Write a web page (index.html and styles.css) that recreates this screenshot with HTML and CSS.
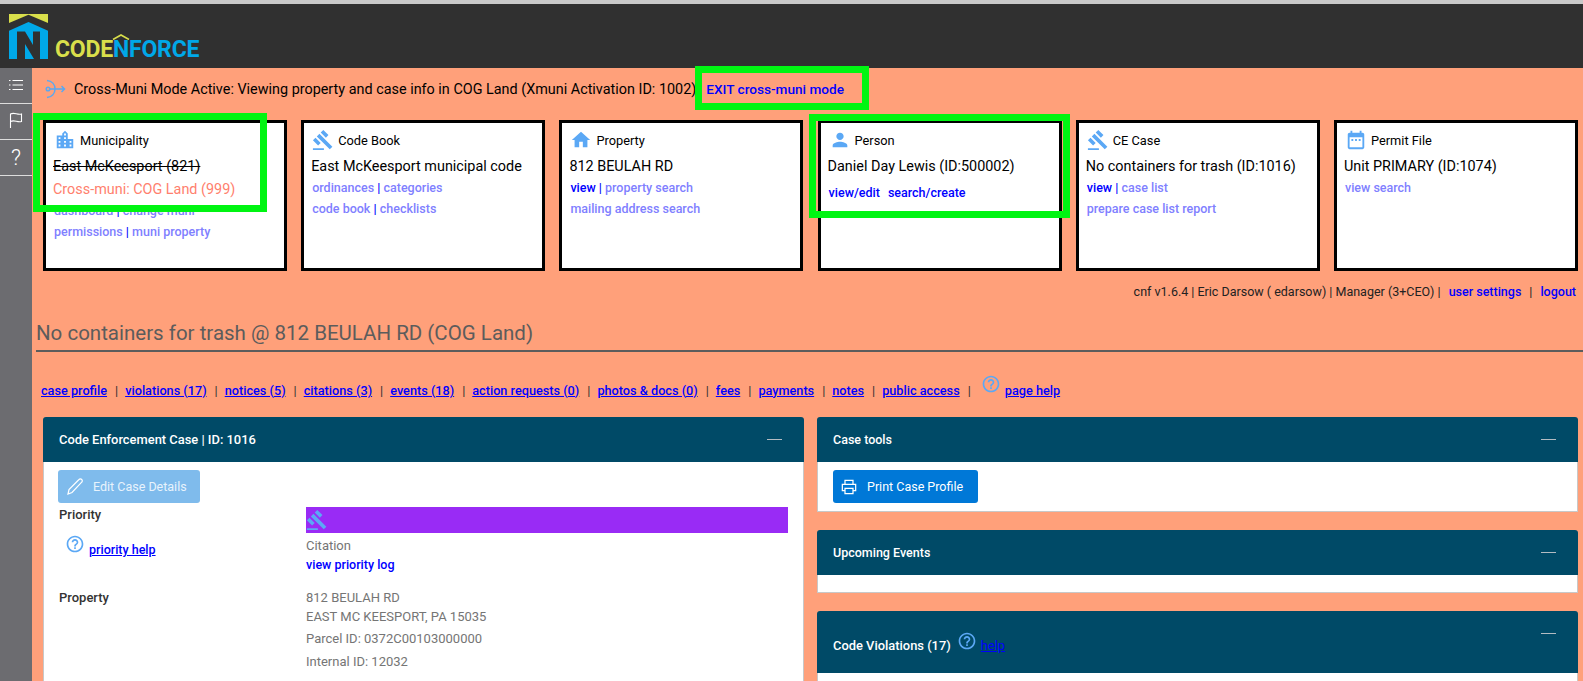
FILE: index.html
```html
<!DOCTYPE html>
<html>
<head>
    <title>CodeNForce</title>
    <meta name="viewport" content="width=device-width, initial-scale=1.0">
    <link rel="stylesheet" href="styles.css">
</head>
<body>
    <svg class="sprites" width="0" height="0">
        <symbol id="i-city" viewBox="0 0 24 24"><path d="M15 11V5l-3-3-3 3v2H3v14h18V11h-6zm-8 8H5v-2h2v2zm0-4H5v-2h2v2zm0-4H5V9h2v2zm6 8h-2v-2h2v2zm0-4h-2v-2h2v2zm0-4h-2V9h2v2zm0-4h-2V5h2v2zm6 12h-2v-2h2v2zm0-4h-2v-2h2v2z"/></symbol>
        <symbol id="i-gavel" viewBox="0 0 24 24"><path d="M1 21h12v2H1zM5.245 8.07l2.83-2.827 14.14 14.142-2.828 2.828zM12.317 1l5.657 5.656-2.83 2.83-5.654-5.66zM3.825 9.485l5.657 5.657-2.828 2.828-5.657-5.657z"/></symbol>
        <symbol id="i-home" viewBox="0 0 24 24"><path d="M10 20v-6h4v6h5v-8h3L12 3 2 12h3v8z"/></symbol>
        <symbol id="i-person" viewBox="0 0 24 24"><path d="M12 12c2.21 0 4-1.79 4-4s-1.79-4-4-4-4 1.79-4 4 1.79 4 4 4zm0 2c-2.67 0-8 1.34-8 4v2h16v-2c0-2.66-5.33-4-8-4z"/></symbol>
        <symbol id="i-cal" viewBox="0 0 24 24"><path d="M9 11H7v2h2v-2zm4 0h-2v2h2v-2zm4 0h-2v2h2v-2zm2-7h-1V2h-2v2H8V2H6v2H5c-1.11 0-1.99.9-1.99 2L3 20c0 1.1.89 2 2 2h14c1.1 0 2-.9 2-2V6c0-1.1-.9-2-2-2zm0 16H5V9h14v11z"/></symbol>
        <symbol id="i-help" viewBox="0 0 24 24"><path d="M11 18h2v-2h-2v2zm1-16C6.48 2 2 6.48 2 12s4.48 10 10 10 10-4.48 10-10S17.52 2 12 2zm0 18c-4.41 0-8-3.59-8-8s3.59-8 8-8 8 3.59 8 8-3.59 8-8 8zm0-14c-2.21 0-4 1.79-4 4h2c0-1.1.9-2 2-2s2 .9 2 2c0 2-3 1.75-3 5h2c0-2.25 3-2.5 3-5 0-2.21-1.79-4-4-4z"/></symbol>
    </svg>

    <div class="topstrip"></div>
    <header class="topbar">
        <svg class="logo-mark" viewBox="0 0 39 45" width="39" height="45">
            <path fill="#d9df4b" d="M0 0h39v9L19.500.7 0 9z"/>
            <path fill="#00a8e8" d="M0 16.700 19.500 8 39 16.700V45H0z"/>
            <path fill="#303030" d="M8 17.500h8L24 31V17.500h7V45h-6L16 30v15H8z"/>
        </svg>
        <div class="logo-text">CODE<span class="logo-n">N<svg class="logo-caret" viewBox="0 0 18 6" width="18" height="6"><path fill="none" stroke="#d9df4b" stroke-width="1.600" d="M1 5.500 9 1l8 4.500"/></svg></span><span class="logo-blue">FORCE</span></div>
    </header>

    <div class="layout">
        <nav class="sidebar">
            <div class="side-item">
                <svg class="side-icon" viewBox="0 0 16 16" width="16" height="16" fill="none" stroke="#fff" stroke-width="1.100"><path d="M4.500 3.500H15M4.500 8H15M4.500 12.500H15M1 3.500h1.500M1 8h1.500M1 12.500h1.500"/></svg>
            </div>
            <div class="side-item">
                <svg class="side-icon flag" viewBox="0 0 16 16" width="16" height="18" fill="none" stroke="#fff" stroke-width="1.100"><path d="M2.500 16V2c4-2.200 6.500 1.200 11 0v7.500c-4.500 1.200-7-2.200-11 0"/></svg>
            </div>
            <div class="side-item side-q">?</div>
        </nav>

        <main class="content">
            <div class="xmuni">
                <svg class="xmuni-icon" viewBox="0 0 22 22" width="22" height="22" fill="none" stroke="#5ba8f0" stroke-width="1.500">
                    <path d="M3 2.500c5 .5 8 4 8 8.500s-3 8-8 8.500"/>
                    <circle cx="4" cy="11" r="1.800"/>
                    <path d="M6 11h14.500M17.500 8l3 3-3 3"/>
                </svg>
                <span>Cross-Muni Mode Active: Viewing property and case info in COG Land (Xmuni Activation ID: 1002)</span>
                <a class="exit-link" href="#">EXIT cross-muni mode</a>
            </div>

            <section class="cards">
                <div class="card">
                    <div class="card-title"><svg class="icon"><use href="#i-city"/></svg>Municipality</div>
                    <div class="card-main"><s>East McKeesport (821)</s></div>
                    <div class="card-main cross">Cross-muni: COG Land (999)</div>
                    <div class="card-links cross-links"><a class="dim" href="#">dashboard</a> | <a class="dim" href="#">change muni</a><br><a class="dim" href="#">permissions</a> | <a class="dim" href="#">muni property</a></div>
                </div>
                <div class="card">
                    <div class="card-title"><svg class="icon"><use href="#i-gavel"/></svg>Code Book</div>
                    <div class="card-main">East McKeesport municipal code</div>
                    <div class="card-links"><a class="dim" href="#">ordinances</a> | <a class="dim" href="#">categories</a><br><a class="dim" href="#">code book</a> | <a class="dim" href="#">checklists</a></div>
                </div>
                <div class="card">
                    <div class="card-title"><svg class="icon"><use href="#i-home"/></svg>Property</div>
                    <div class="card-main">812 BEULAH RD</div>
                    <div class="card-links"><a href="#">view</a> | <a class="dim" href="#">property search</a><br><a class="dim" href="#">mailing address search</a></div>
                </div>
                <div class="card">
                    <div class="card-title"><svg class="icon"><use href="#i-person"/></svg>Person</div>
                    <div class="card-main">Daniel Day Lewis (ID:500002)</div>
                    <div class="card-links person-links"><a href="#">view/edit</a><a href="#">search/create</a></div>
                </div>
                <div class="card">
                    <div class="card-title"><svg class="icon"><use href="#i-gavel"/></svg>CE Case</div>
                    <div class="card-main">No containers for trash (ID:1016)</div>
                    <div class="card-links"><a href="#">view</a> | <a class="dim" href="#">case list</a><br><a class="dim" href="#">prepare case list report</a></div>
                </div>
                <div class="card">
                    <div class="card-title"><svg class="icon"><use href="#i-cal"/></svg>Permit File</div>
                    <div class="card-main">Unit PRIMARY (ID:1074)</div>
                    <div class="card-links"><a class="dim" href="#">view search</a></div>
                </div>
            </section>

            <div class="userline">
                <span>cnf v1.6.4 | Eric Darsow ( edarsow) | Manager (3+CEO) |</span>
                <a href="#">user settings</a>
                <span>|</span>
                <a href="#">logout</a>
            </div>

            <h1 class="case-title">No containers for trash @ 812 BEULAH RD (COG Land)</h1>

            <div class="subnav">
                <a href="#">case profile</a><i>|</i>
                <a href="#">violations (17)</a><i>|</i>
                <a href="#">notices (5)</a><i>|</i>
                <a href="#">citations (3)</a><i>|</i>
                <a href="#">events (18)</a><i>|</i>
                <a href="#">action requests (0)</a><i>|</i>
                <a href="#">photos &amp; docs (0)</a><i>|</i>
                <a href="#">fees</a><i>|</i>
                <a href="#">payments</a><i>|</i>
                <a href="#">notes</a><i>|</i>
                <a href="#">public access</a><i>|</i>
                <svg class="help-icon"><use href="#i-help"/></svg>
                <a class="page-help" href="#">page help</a>
            </div>

            <div class="panels">
                <div class="col">
                    <div class="panel">
                        <div class="panel-head big"><span>Code Enforcement Case | ID: 1016</span><b class="minus"></b></div>
                        <div class="panel-body">
                            <button class="btn btn-off">
                                <svg viewBox="0 0 18 18" width="18" height="18" fill="none" stroke="#fff" stroke-width="1.200"><path d="M2 16l1-4.500L13 1.500a1.800 1.800 0 0 1 2.700 0 1.800 1.800 0 0 1 0 2.700L6 14.500z"/></svg>
                                Edit Case Details
                            </button>
                            <div class="fields">
                                <div class="field-name">Priority
                                    <div class="priority-help"><svg class="help-icon"><use href="#i-help"/></svg><a href="#">priority help</a></div>
                                </div>
                                <div class="field-val">
                                    <div class="priority-bar"><svg class="icon"><use href="#i-gavel"/></svg></div>
                                    <div class="citation">Citation</div>
                                    <a class="log-link" href="#">view priority log</a>
                                </div>
                                <div class="field-name">Property</div>
                                <div class="field-val address">
                                    <div>812 BEULAH RD</div>
                                    <div>EAST MC KEESPORT, PA 15035</div>
                                    <div class="gap">Parcel ID: 0372C00103000000</div>
                                    <div class="gap">Internal ID: 12032</div>
                                </div>
                            </div>
                        </div>
                    </div>
                </div>
                <div class="col">
                    <div class="panel">
                        <div class="panel-head"><span>Case tools</span><b class="minus"></b></div>
                        <div class="panel-body">
                            <button class="btn btn-print">
                                <svg viewBox="0 0 18 18" width="16" height="16" fill="none" stroke="#fff" stroke-width="1.400"><path d="M4.500 6V1.500h9V6M4.500 13H1.500V6h15v7h-3M4.500 10.500h9v6h-9z"/></svg>
                                Print Case Profile
                            </button>
                        </div>
                    </div>
                    <div class="panel">
                        <div class="panel-head"><span>Upcoming Events</span><b class="minus"></b></div>
                        <div class="panel-body empty"></div>
                    </div>
                    <div class="panel">
                        <div class="panel-head tall big"><span>Code Violations (17)</span><svg class="help-icon"><use href="#i-help"/></svg><a href="#">help</a><b class="minus"></b></div>
                        <div class="panel-body empty"></div>
                    </div>
                </div>
            </div>
        </main>
    </div>

    <!-- green review markers drawn over the screen -->
    <div class="marker m-muni"></div>
    <div class="marker m-exit"></div>
    <div class="marker m-person"></div>
</body>
</html>
```

FILE: styles.css
```css
* {
    box-sizing: border-box;
}

html, body {
    height: 681px;
    overflow: hidden;
}

body {
    margin: 0;
    font-family: "Roboto", sans-serif;
    background-color: #ffa07a;
    color: #000;
    position: relative;
}

.sprites {
    position: absolute;
}

.topstrip {
    height: 4px;
    background-color: #c9c9c9;
}

.topbar {
    height: 64px;
    background-color: #303030;
    position: relative;
    display: flex;
    align-items: flex-end;
    padding: 0 0 9px 9px;
}

.logo-mark {
    display: block;
}

.logo-text {
    font-size: 23px;
    font-weight: 700;
    color: #d9df4b;
    line-height: 18px;
    margin-left: 7px;
    letter-spacing: -0.2px;
}

.logo-n {
    color: #00a8e8;
    position: relative;
}

.logo-caret {
    position: absolute;
    left: -1px;
    top: -2px;
}

.logo-blue {
    color: #00a8e8;
}

.layout {
    display: flex;
    height: 613px;
    overflow: hidden;
}

.sidebar {
    width: 32px;
    flex-shrink: 0;
    background-color: #6c6c70;
}

.side-item {
    height: 36px;
    border-bottom: 1px solid #ddd;
    display: flex;
    align-items: center;
    justify-content: center;
    color: #fff;
}

.side-icon {
    margin-bottom: 2px;
}

.side-icon.flag {
    margin-bottom: 4px;
}

.side-q {
    font-size: 22px;
    font-weight: 300;
}

.content {
    flex: 1;
    min-width: 0;
    padding: 0 5px 0 4px;
}

.xmuni {
    height: 52px;
    display: flex;
    align-items: center;
    font-size: 14.400px;
    padding: 0 0 10px 8px;
}

.xmuni-icon {
    margin-right: 8px;
}

.exit-link {
    color: #00f;
    font-weight: 500;
    font-size: 13.600px;
    text-decoration: none;
    margin-left: 10px;
}

.cards {
    display: grid;
    grid-template-columns: repeat(6, 244px);
    justify-content: space-between;
    margin-left: 7px;
}

.card {
    height: 151px;
    background-color: #fff;
    border: 3px solid #000;
    padding: 5px 8px 0 8px;
}

.card-title {
    display: flex;
    align-items: center;
    font-size: 12.800px;
    height: 24px;
}

.icon {
    width: 22px;
    height: 22px;
    fill: #5ba8f5;
    margin-right: 4px;
}

.card-main {
    font-size: 14.400px;
    line-height: 24px;
    white-space: nowrap;
    margin: 3px 0 -1px -1px;
}

.card-main + .card-main {
    margin-top: 0;
}

.card .card-main:first-of-type {
    margin-bottom: 0;
}

.cross {
    color: #ff7f6e;
}

.card-links {
    font-size: 12.500px;
    line-height: 20.500px;
    font-weight: 500;
    color: #00f;
}

.card-links a {
    color: #00f;
    text-decoration: none;
}

.card-links a.dim {
    color: #8080ff;
}

.person-links {
    margin-top: 5px;
}

.person-links a {
    margin-right: 8px;
}

.userline {
    display: flex;
    justify-content: flex-end;
    gap: 7px;
    font-size: 12.500px;
    margin-top: 12px;
    padding-right: 1px;
    height: 17px;
    align-items: center;
    color: #222;
}

.userline a {
    color: #00f;
    font-weight: 500;
    text-decoration: none;
    margin: 0 1px;
}

.case-title {
    font-size: 20.500px;
    font-weight: 400;
    color: #5c5c5c;
    margin: 19px -5px 0 0;
    line-height: 28px;
    padding-bottom: 3px;
    border-bottom: 2px solid #5c5c5c;
}

.subnav {
    display: flex;
    align-items: center;
    margin: 26px 0 0 5px;
    height: 24px;
    font-size: 12.700px;
    font-weight: 500;
}

.subnav a {
    color: #00f;
}

.subnav i {
    font-style: normal;
    font-weight: 400;
    margin: 0 7px 0 8px;
    color: #333;
}

.help-icon {
    width: 20px;
    height: 20px;
    fill: #5ba8f5;
    flex-shrink: 0;
}

.subnav .help-icon {
    margin: -13px 4px 0 3px;
}

.panels {
    display: flex;
    gap: 13px;
    margin: 15px 0 0 7px;
}

.col {
    flex: 1;
    min-width: 0;
}

.panel {
    margin-bottom: 18px;
    border-radius: 3px;
}

.panel-head {
    height: 45px;
    background-color: #004a67;
    color: #fff;
    border-radius: 3px 3px 0 0;
    display: flex;
    align-items: center;
    padding: 0 16px;
    font-size: 12.500px;
    font-weight: 500;
    position: relative;
}

.panel-head.big {
    font-size: 12.900px;
}

.panel-head.tall {
    height: 62px;
    padding-top: 6px;
}

.panel-head a {
    color: #00f;
    font-weight: 400;
    margin-top: 1px;
}

.panel-head .help-icon {
    margin: -9px 4px 0 6px;
}

.minus {
    position: absolute;
    right: 22px;
    top: 22px;
    width: 15px;
    height: 1px;
    background-color: #b4bcc2;
}

.panel-body {
    background-color: #fff;
    border: 1px solid #c8c8c8;
    border-top: 0;
    padding: 8px 14px;
}

.panel-body.empty {
    height: 18px;
    padding: 0;
}

.btn {
    display: flex;
    align-items: center;
    height: 33px;
    border: none;
    border-radius: 3px;
    background-color: #0078d7;
    color: #fff;
    font-family: inherit;
    font-size: 12.500px;
    padding: 0 8px;
    gap: 10px;
    white-space: nowrap;
}

.btn-off {
    background-color: #7fbbec;
    color: #e8f3fc;
    width: 142px;
    gap: 9px;
}

.btn-print {
    width: 145px;
    margin-left: 1px;
}

.fields {
    display: grid;
    grid-template-columns: 247px 1fr;
    margin: 2px 1px 0 1px;
    padding-bottom: 30px;
    font-size: 13px;
}

.field-name {
    font-weight: 500;
    color: #333;
    line-height: 19px;
}

.priority-help {
    font-weight: 400;
    margin: 10px 0 0 6px;
    display: flex;
    align-items: flex-end;
    gap: 4px;
    font-size: 12.500px;
}

.priority-help a {
    color: #00f;
    font-weight: 500;
    line-height: 15px;
}

.priority-help .help-icon {
    margin-bottom: 3px;
}

.priority-bar {
    height: 26px;
    background-color: #992bf5;
    display: flex;
    align-items: center;
    margin-top: 2px;
}

.citation {
    color: #757575;
    margin-top: 5px;
    line-height: 16px;
}

.log-link {
    display: block;
    color: #00f;
    font-size: 12.500px;
    font-weight: 500;
    text-decoration: none;
    line-height: 16px;
    margin: 3px 0 15px 0;
}

.address {
    color: #757575;
    line-height: 19px;
}

.address .gap {
    margin-top: 3px;
}

.address .gap:last-child {
    margin-top: 4px;
}

.marker {
    position: absolute;
    border: 7px solid #00f512;
}

.m-muni {
    left: 33px;
    top: 113px;
    width: 234px;
    height: 99px;
}

.m-exit {
    left: 695px;
    top: 66px;
    width: 174px;
    height: 44px;
}

.m-person {
    left: 809px;
    top: 114px;
    width: 261px;
    height: 104px;
}
```
